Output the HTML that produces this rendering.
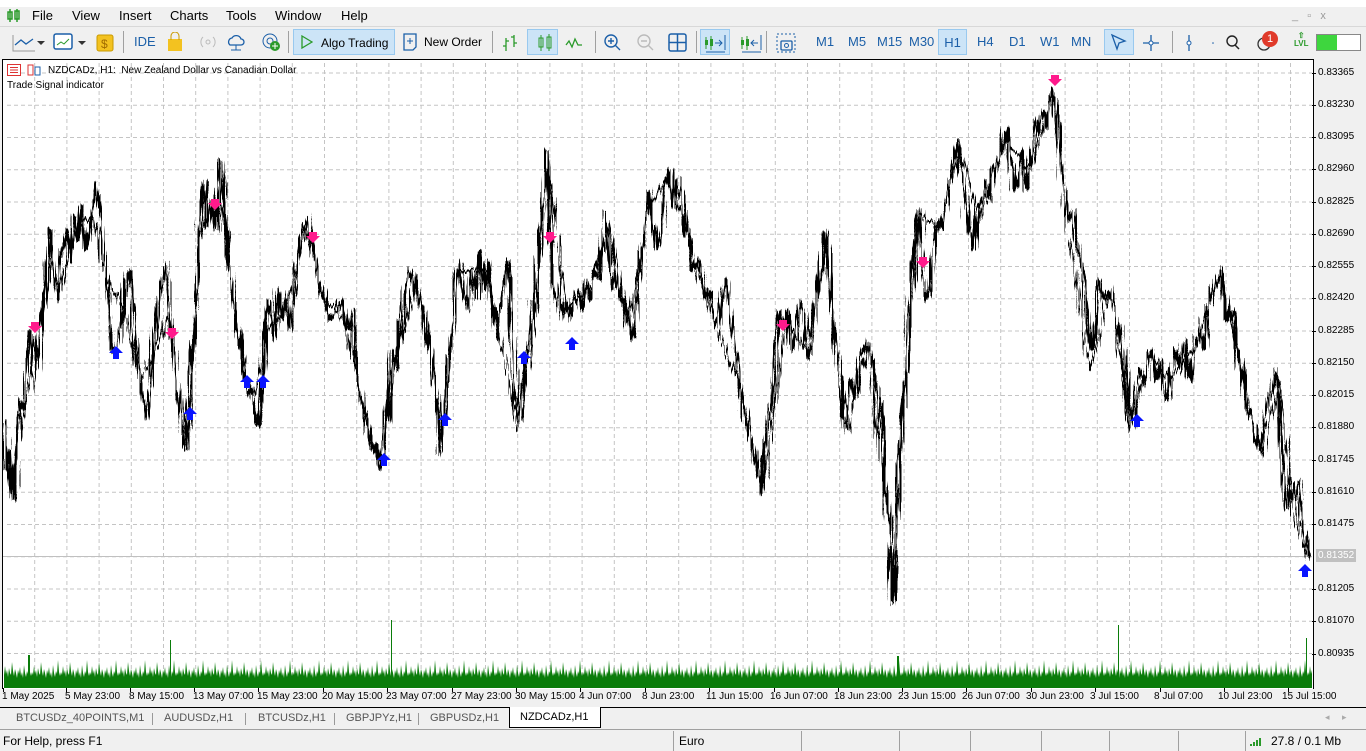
<!DOCTYPE html>
<html><head><meta charset="utf-8"><style>
*{margin:0;padding:0;box-sizing:border-box}
body{width:1366px;height:751px;overflow:hidden;background:#f0f0f0;font-family:"Liberation Sans",sans-serif;font-size:12px;color:#000;position:relative}
.abs{position:absolute}
.menu span{position:absolute;top:8px;font-size:13px}
.tb{position:absolute;top:29px;height:26px;font-size:13px;color:#1b5fa8;line-height:26px}
.sel{background:#cce4f7;border:1px solid #99c9ef}
.sep{position:absolute;top:31px;width:1px;height:22px;background:#a0a0a0}
.tab{position:absolute;top:712px;font-size:11px;color:#555}
.px{position:absolute;left:1318px;font-size:10px;font-family:"Liberation Sans",sans-serif}
.dt{position:absolute;top:691px;font-size:10px;font-family:"Liberation Sans",sans-serif}
.ss{position:absolute;top:731px;width:1px;height:20px;background:#a0a0a0}
</style></head><body>
<div class="abs" style="left:0;top:0;width:1366px;height:7px;background:#fff"></div>
<div class="menu">
<svg class="abs" style="left:7px;top:9px" width="14" height="13"><g stroke="#2a9a2a" fill="none" stroke-width="1.5"><rect x="1" y="3" width="4" height="7"/><rect x="8" y="2" width="4" height="8"/><path d="M3 0v13M10 0v13"/></g></svg>
<span style="left:32px">File</span><span style="left:72px">View</span><span style="left:119px">Insert</span><span style="left:170px">Charts</span><span style="left:226px">Tools</span><span style="left:275px">Window</span><span style="left:341px">Help</span>
</div>
<div class="abs" style="left:1292px;top:10px;color:#999;font-size:11px">_&nbsp;&nbsp;&nbsp;▫&nbsp;&nbsp;&nbsp;x</div>
<div class="abs" style="left:0;top:26px;width:1366px;height:1px;background:#d8d8d8"></div>
<svg class="abs" style="left:12px;top:33px" width="120" height="20"><path d="M1 2v16h22" stroke="#999" fill="none"/><path d="M3 12l6-5 5 4 7-5" stroke="#1b5fa8" fill="none" stroke-width="1.3"/><path d="M25 8l4 4 4-4z" fill="#333"/><rect x="42" y="1" width="18" height="15" rx="2" stroke="#1b5fa8" fill="#fff" stroke-width="1.5"/><path d="M45 12l4-3 3 2 5-5" stroke="#2a9a2a" fill="none"/><path d="M66 8l4 4 4-4z" fill="#333"/><rect x="85" y="2" width="16" height="16" rx="2" fill="#f3c220" stroke="#c99a00"/><text x="89" y="15" font-size="12" fill="#a06b00" font-family="Liberation Sans">$</text></svg>
<div class="sep" style="left:123px"></div>
<div class="tb" style="left:134px">IDE</div>
<svg class="abs" style="left:166px;top:32px" width="120" height="20"><path d="M2 7h14v12H2z" fill="#f3c220"/><path d="M5 8V4a4 4 0 0 1 8 0v4" stroke="#c99a00" fill="none"/><circle cx="42" cy="10" r="2" stroke="#bbb" fill="none"/><path d="M37 5a7 7 0 0 0 0 10M47 5a7 7 0 0 1 0 10" stroke="#bbb" fill="none"/><path d="M64 13a4 4 0 0 1 2-7 5 5 0 0 1 9 1 3 3 0 0 1 0 6z" stroke="#1b5fa8" fill="none" stroke-width="1.3"/><path d="M70 13v5M65 18h10" stroke="#1b5fa8"/><circle cx="104" cy="9" r="7" stroke="#1b5fa8" fill="none"/><circle cx="104" cy="9" r="3" stroke="#1b5fa8" fill="none"/><circle cx="109" cy="14" r="5" fill="#2a9a2a"/><path d="M106 14h6M109 11v6" stroke="#fff"/></svg>
<div class="sep" style="left:288px"></div>
<div class="tb sel" style="left:293px;width:102px;color:#000;padding-left:27px;font-size:12px">Algo Trading</div>
<svg class="abs" style="left:301px;top:35px" width="12" height="14"><path d="M1 1l10 6-10 6z" stroke="#2a9a2a" fill="none" stroke-width="1.3"/></svg>
<svg class="abs" style="left:403px;top:33px" width="14" height="18"><path d="M1 1h12v13l-3 3H1z" stroke="#1b5fa8" fill="none" stroke-width="1.3"/><path d="M4 8h6M7 5v6" stroke="#1b5fa8"/></svg>
<div class="tb" style="left:424px;color:#000;font-size:12px">New Order</div>
<div class="sep" style="left:492px"></div>
<div class="tb sel" style="left:527px;width:31px"></div>
<svg class="abs" style="left:502px;top:33px" width="90" height="20"><path d="M4 5v13M4 13h-3M4 8h3M12 2v12M12 4h-3M12 10h3" stroke="#2a9a2a" fill="none" stroke-width="1.3"/><rect x="37" y="5" width="4" height="9" stroke="#2a9a2a" fill="none"/><rect x="45" y="4" width="4" height="11" stroke="#2a9a2a" fill="none"/><path d="M39 2v16M47 1v17" stroke="#2a9a2a"/><path d="M64 12l3-4 3 6 3-8 3 6h4" stroke="#2a9a2a" fill="none" stroke-width="1.3"/></svg>
<div class="sep" style="left:595px"></div>
<svg class="abs" style="left:603px;top:33px" width="90" height="20"><circle cx="8" cy="8" r="6" stroke="#1b5fa8" fill="none" stroke-width="1.4"/><path d="M12 12l5 5M5 8h6M8 5v6" stroke="#1b5fa8" stroke-width="1.4"/><circle cx="41" cy="8" r="6" stroke="#bbb" fill="none" stroke-width="1.4"/><path d="M45 12l5 5M38 8h6" stroke="#bbb" stroke-width="1.4"/><rect x="66" y="1" width="17" height="17" rx="2" stroke="#1b5fa8" fill="none" stroke-width="1.5"/><path d="M74.5 1v17M66 9.5h17" stroke="#1b5fa8" stroke-width="1.5"/></svg>
<div class="sep" style="left:696px"></div>
<div class="tb sel" style="left:700px;width:30px"></div>
<svg class="abs" style="left:704px;top:33px" width="60" height="20"><path d="M2 4v12M7 3v14" stroke="#2a9a2a"/><rect x="1" y="7" width="3" height="5" fill="#2a9a2a"/><rect x="6" y="6" width="3" height="7" fill="#2a9a2a"/><path d="M11 10h7M15 7l3 3-3 3M21 2v15M2 19h19" stroke="#1b5fa8" fill="none"/><path d="M38 4v12M43 3v14" stroke="#2a9a2a"/><rect x="37" y="7" width="3" height="5" fill="#2a9a2a"/><rect x="42" y="6" width="3" height="7" fill="#2a9a2a"/><path d="M47 10h7M50 7l-3 3 3 3M57 2v15M38 19h19" stroke="#1b5fa8" fill="none"/></svg>
<div class="sep" style="left:766px"></div>
<svg class="abs" style="left:776px;top:32px" width="20" height="22"><rect x="1" y="2" width="18" height="18" stroke="#1b5fa8" fill="none" stroke-dasharray="2 2"/><rect x="5" y="9" width="11" height="9" rx="1" stroke="#1b5fa8" fill="none" stroke-width="1.3"/><circle cx="10.5" cy="13.5" r="2" stroke="#1b5fa8" fill="none"/></svg>
<div class="tb" style="left:816px">M1</div><div class="tb" style="left:848px">M5</div><div class="tb" style="left:877px">M15</div><div class="tb" style="left:909px">M30</div>
<div class="tb sel" style="left:938px;width:29px;text-align:center">H1</div>
<div class="tb" style="left:977px">H4</div><div class="tb" style="left:1009px">D1</div><div class="tb" style="left:1040px">W1</div><div class="tb" style="left:1071px">MN</div>
<div class="tb sel" style="left:1104px;width:30px"></div>
<svg class="abs" style="left:1109px;top:33px" width="200" height="20"><path d="M3 2l13 6-6 2-2 6z" stroke="#1b5fa8" fill="none" stroke-width="1.3"/><path d="M42 2v16M34 10h16" stroke="#1b5fa8" stroke-width="1.3"/><circle cx="42" cy="10" r="2" fill="#fff" stroke="#1b5fa8"/><path d="M80 2v16" stroke="#1b5fa8" stroke-width="1.3"/><circle cx="80" cy="10" r="2" fill="#fff" stroke="#1b5fa8"/><circle cx="104" cy="10" r="0.8" fill="#1b5fa8"/><circle cx="123" cy="8" r="5" stroke="#222" fill="none" stroke-width="1.4"/><path d="M126 12l4 4" stroke="#222" stroke-width="1.5"/><circle cx="155" cy="11" r="6" stroke="#333" fill="none" stroke-width="1.3"/></svg>
<div class="sep" style="left:1172px"></div>
<div class="abs" style="left:1262px;top:31px;width:16px;height:16px;border-radius:8px;background:#e03a2a;color:#fff;font-size:11px;text-align:center;line-height:16px">1</div>
<div class="abs" style="left:1294px;top:32px;color:#2a9a2a;font-size:8px;font-weight:bold;line-height:8px;text-align:center">⇧<br>LVL</div>
<div class="abs" style="left:1316px;top:34px;width:45px;height:17px;border:1px solid #888;background:#fff"><div style="width:20px;height:15px;background:#3ed63e"></div></div>
<div class="abs" style="left:3px;top:59px;width:1311px;height:630px;background:#fff;border-top:1px solid #000;border-right:1px solid #000"></div>
<div class="abs" style="left:2px;top:59px;width:1px;height:630px;background:#000"></div>
<svg class="abs" style="left:0;top:0" width="1366" height="751">
<defs>
<pattern id="vg" x="2" y="0" width="32.2" height="751" patternUnits="userSpaceOnUse"><line x1="0.5" y1="0" x2="0.5" y2="751" stroke="#c4c4c4" stroke-dasharray="4 3"/></pattern>
<pattern id="hg" x="0" y="72.5" width="1366" height="32.25" patternUnits="userSpaceOnUse"><line x1="0" y1="0.5" x2="1366" y2="0.5" stroke="#c4c4c4" stroke-dasharray="4 3"/></pattern>
<pattern id="vol" x="3" y="0" width="29" height="751" patternUnits="userSpaceOnUse"><path d="M0 688V672L1 675 2 666 3 674 4 670 5 677 6 668 7 673 8 675 9 662 10 671 11 676 12 669 13 673 14 678 15 670 16 674 17 667 18 676 19 672 20 678 21 665 22 673 23 677 24 671 25 674 26 660 27 672 28 676 29 672V688z" fill="#0a7c0a"/></pattern>
<filter id="rough" x="-2%" y="-10%" width="104%" height="120%"><feTurbulence type="fractalNoise" baseFrequency="0.45 0.02" numOctaves="2" seed="3"/><feDisplacementMap in="SourceGraphic" scale="14" xChannelSelector="R" yChannelSelector="G"/></filter>
</defs>
<rect x="4" y="61" width="1308" height="627" fill="url(#vg)"/>
<rect x="4" y="61" width="1308" height="627" fill="url(#hg)"/>
<rect x="4" y="650" width="1308" height="38" fill="url(#vol)"/>
<path d="M170 688V640h1V688zM391 688V620h1V688zM1118 688V625h1V688zM1306 688V638h1V688zM897 688V656h2V688zM28 688V655h2V688z" fill="#0a7c0a"/>
<line x1="3" y1="556.5" x2="1312" y2="556.5" stroke="#c0c0c0"/>
<g filter="url(#rough)">
<polyline fill="none" stroke="#000" stroke-width="3.2" stroke-linejoin="bevel" points="3,420 7,470 10,450 14,500 17,430 20,400 24,410 28,350 31,330 36,380 40,340 45,300 50,230 54,280 58,300 62,250 66,230 70,260 74,215 78,240 82,205 86,250 90,220 94,200 97,180 101,240 105,265 109,300 112,350 116,355 120,330 125,290 130,270 134,320 138,360 142,390 146,420 150,390 155,330 160,290 165,265 169,300 172,330 175,370 178,400 182,430 186,450 190,410 194,340 198,260 201,210 205,180 208,230 212,200 216,230 220,160 224,200 227,250 232,280 236,320 240,340 244,380 248,385 252,395 256,410 260,425 263,370 266,320 270,300 274,340 278,290 282,320 286,300 290,330 295,290 300,240 304,225 308,215 312,240 316,260 320,290 324,300 330,320 336,310 342,300 348,330 352,310 356,360 360,390 364,420 368,430 372,450 376,445 380,460 384,440 388,400 392,350 396,370 400,330 404,300 408,280 412,270 416,290 420,300 425,320 430,350 434,380 437,410 441,440 445,400 449,350 452,320 456,280 460,260 464,290 468,310 472,270 476,300 480,250 484,290 488,260 492,300 496,340 500,320 504,280 508,260 512,340 516,400 520,420 524,380 528,340 532,300 536,320 540,240 544,200 547,150 550,220 553,270 557,300 561,320 565,300 570,320 574,300 578,290 582,310 586,280 590,300 594,270 598,280 602,250 606,210 609,260 613,290 617,270 621,300 625,300 629,320 633,340 637,300 641,260 645,230 649,190 653,220 657,250 661,230 665,190 670,170 674,210 678,180 682,200 686,230 690,240 694,270 698,260 702,280 706,300 710,290 714,320 718,330 722,300 726,280 730,310 734,340 738,380 742,400 746,420 750,430 754,450 758,470 761,490 764,450 768,420 772,400 776,340 780,310 784,330 788,310 792,350 796,330 800,300 804,320 808,360 812,340 816,300 820,270 824,250 827,230 831,300 835,340 839,380 843,420 847,400 851,380 855,400 859,360 863,350 867,340 871,360 875,380 879,400 882,440 885,470 888,520 891,560 894,600 897,500 900,450 903,400 906,370 909,320 912,270 916,230 919,210 922,250 926,300 930,290 934,240 938,220 942,230 946,200 950,180 954,160 958,140 962,180 966,200 970,230 974,250 978,210 982,200 986,180 990,200 994,170 998,160 1002,150 1006,130 1010,160 1014,190 1018,170 1022,150 1026,190 1030,160 1034,140 1038,120 1042,110 1046,130 1050,100 1054,95 1058,120 1061,160 1064,190 1068,220 1072,210 1076,240 1080,260 1084,280 1088,320 1092,350 1096,300 1100,280 1104,300 1108,290 1112,300 1116,320 1120,330 1124,360 1128,400 1132,420 1136,390 1140,370 1144,380 1148,360 1152,350 1156,380 1160,360 1164,390 1168,400 1172,370 1176,350 1180,370 1184,340 1188,360 1192,380 1196,340 1200,330 1204,350 1208,310 1212,290 1216,280 1220,265 1224,300 1228,320 1232,310 1236,340 1240,360 1244,380 1248,410 1252,420 1256,440 1260,450 1264,430 1268,400 1272,390 1276,370 1279,400 1282,470 1286,510 1290,490 1294,500 1298,480 1302,520 1306,540 1310,558"/>
<polyline fill="none" stroke="#000" stroke-width="2" points="5,440 12,480 22,420 34,370 48,260 60,290 76,230 92,215 108,280 124,310 140,380 156,350 170,310 184,440 200,240 218,190 234,300 252,400 268,330 284,310 306,230 326,300 344,320 362,400 380,470 398,350 414,285 432,360 440,455 458,270 486,270 500,340 518,430 534,330 548,160 566,310 592,285 608,220 628,330 648,210 668,175 696,270 716,325 740,390 762,495 786,320 806,350 826,240 846,430 868,345 884,480 893,605 906,360 920,215 940,230 960,150 980,220 1004,140 1030,170 1052,90 1066,220 1090,370 1110,290 1130,430 1150,355 1172,380 1196,345 1220,270 1246,400 1262,455 1280,380 1292,505 1308,560"/>
</g>
<g fill="#ff1a8c"><path d="M31 322h8v4h3l-7 7-7-7h3z"/><path d="M168 328h8v4h3l-7 7-7-7h3z"/><path d="M211 199h8v4h3l-7 7-7-7h3z"/><path d="M309 232h8v4h3l-7 7-7-7h3z"/><path d="M546 232h8v4h3l-7 7-7-7h3z"/><path d="M779 320h8v4h3l-7 7-7-7h3z"/><path d="M919 257h8v4h3l-7 7-7-7h3z"/><path d="M1051 75h8v4h3l-7 7-7-7h3z"/></g>
<g fill="#0a14ff"><path d="M116 346l7 7h-4v6h-6v-6h-4z"/><path d="M190 407l7 7h-4v6h-6v-6h-4z"/><path d="M247 375l7 7h-4v6h-6v-6h-4z"/><path d="M263 375l7 7h-4v6h-6v-6h-4z"/><path d="M384 453l7 7h-4v6h-6v-6h-4z"/><path d="M445 413l7 7h-4v6h-6v-6h-4z"/><path d="M524 351l7 7h-4v6h-6v-6h-4z"/><path d="M572 337l7 7h-4v6h-6v-6h-4z"/><path d="M1137 414l7 7h-4v6h-6v-6h-4z"/><path d="M1305 564l7 7h-4v6h-6v-6h-4z"/></g>
<g stroke="#000"><path d="M1312 73.5h4M1312 105.5h4M1312 137.5h4M1312 169.5h4M1312 202.5h4M1312 234.5h4M1312 266.5h4M1312 298.5h4M1312 331.5h4M1312 363.5h4M1312 395.5h4M1312 427.5h4M1312 460.5h4M1312 492.5h4M1312 524.5h4M1312 589.5h4M1312 621.5h4M1312 654.5h4"/>
<path d="M3.5 688v4M66.5 688v4M130.5 688v4M194.5 688v4M258.5 688v4M323.5 688v4M387.5 688v4M452.5 688v4M516.5 688v4M580.5 688v4M645.5 688v4M709.5 688v4M774.5 688v4M838.5 688v4M902.5 688v4M966.5 688v4M1031.5 688v4M1095.5 688v4M1160.5 688v4M1224.5 688v4M1288.5 688v4"/></g>
</svg>
<svg class="abs" style="left:7px;top:64px" width="38" height="13"><rect x="0.5" y="0.5" width="13" height="11" fill="#fff" stroke="#d33"/><path d="M3 3.5h8M3 6h8M3 8.5h8" stroke="#d33"/><rect x="21" y="1" width="5" height="10" fill="#fff" stroke="#d33"/><rect x="28" y="3" width="5" height="8" fill="#fff" stroke="#1b5fa8"/></svg>
<div class="abs" style="left:48px;top:65px;font-size:10px">NZDCADz, H1:&nbsp; New Zealand Dollar vs Canadian Dollar</div>
<div class="abs" style="left:7px;top:80px;font-size:10px">Trade Signal indicator</div>
<div class="px" style="top:67px">0.83365</div><div class="px" style="top:99px">0.83230</div><div class="px" style="top:131px">0.83095</div><div class="px" style="top:163px">0.82960</div><div class="px" style="top:196px">0.82825</div><div class="px" style="top:228px">0.82690</div><div class="px" style="top:260px">0.82555</div><div class="px" style="top:292px">0.82420</div><div class="px" style="top:325px">0.82285</div><div class="px" style="top:357px">0.82150</div><div class="px" style="top:389px">0.82015</div><div class="px" style="top:421px">0.81880</div><div class="px" style="top:454px">0.81745</div><div class="px" style="top:486px">0.81610</div><div class="px" style="top:518px">0.81475</div><div class="px" style="top:583px">0.81205</div><div class="px" style="top:615px">0.81070</div><div class="px" style="top:648px">0.80935</div>
<div class="px" style="top:549px;left:1316px;background:#c0c0c0;color:#fff;padding:1px 2px">0.81352</div>
<div class="dt" style="left:2px">1 May 2025</div><div class="dt" style="left:65px">5 May 23:00</div><div class="dt" style="left:129px">8 May 15:00</div><div class="dt" style="left:193px">13 May 07:00</div><div class="dt" style="left:257px">15 May 23:00</div><div class="dt" style="left:322px">20 May 15:00</div><div class="dt" style="left:386px">23 May 07:00</div><div class="dt" style="left:451px">27 May 23:00</div><div class="dt" style="left:515px">30 May 15:00</div><div class="dt" style="left:579px">4 Jun 07:00</div><div class="dt" style="left:642px">8 Jun 23:00</div><div class="dt" style="left:706px">11 Jun 15:00</div><div class="dt" style="left:770px">16 Jun 07:00</div><div class="dt" style="left:834px">18 Jun 23:00</div><div class="dt" style="left:898px">23 Jun 15:00</div><div class="dt" style="left:962px">26 Jun 07:00</div><div class="dt" style="left:1026px">30 Jun 23:00</div><div class="dt" style="left:1090px">3 Jul 15:00</div><div class="dt" style="left:1154px">8 Jul 07:00</div><div class="dt" style="left:1218px">10 Jul 23:00</div><div class="dt" style="left:1282px">15 Jul 15:00</div>
<div class="abs" style="left:0;top:707px;width:1366px;height:1px;background:#000"></div>
<div class="abs" style="left:0;top:729px;width:1366px;height:1px;background:#a0a0a0"></div>
<div class="tab" style="left:16px">BTCUSDz_40POINTS,M1</div><div class="abs" style="left:152px;top:713px;width:1px;height:12px;background:#999"></div>
<div class="tab" style="left:164px">AUDUSDz,H1</div><div class="abs" style="left:245px;top:713px;width:1px;height:12px;background:#999"></div>
<div class="tab" style="left:258px">BTCUSDz,H1</div><div class="abs" style="left:334px;top:713px;width:1px;height:12px;background:#999"></div>
<div class="tab" style="left:346px">GBPJPYz,H1</div><div class="abs" style="left:418px;top:713px;width:1px;height:12px;background:#999"></div>
<div class="tab" style="left:430px">GBPUSDz,H1</div>
<div class="abs" style="left:509px;top:707px;width:92px;height:21px;background:#fff;border:1px solid #000;border-top:none;font-size:11px;padding:4px 0 0 10px">NZDCADz,H1</div>
<div class="abs" style="left:1325px;top:712px;color:#aaa;font-size:9px">◂&nbsp;&nbsp;&nbsp;&nbsp;&nbsp;▸</div>
<div class="abs" style="left:3px;top:734px;font-size:12px">For Help, press F1</div>
<div class="ss" style="left:673px"></div><div class="abs" style="left:679px;top:734px">Euro</div>
<div class="ss" style="left:801px"></div><div class="ss" style="left:899px"></div><div class="ss" style="left:970px"></div><div class="ss" style="left:1041px"></div><div class="ss" style="left:1109px"></div><div class="ss" style="left:1178px"></div><div class="ss" style="left:1245px"></div>
<svg class="abs" style="left:1250px;top:736px" width="14" height="11"><path d="M1 10v-2M4 10v-4M7 10v-6M10 10v-8" stroke="#2a9a2a" stroke-width="2"/></svg>
<div class="abs" style="left:1271px;top:734px">27.8 / 0.1 Mb</div>
</body></html>
